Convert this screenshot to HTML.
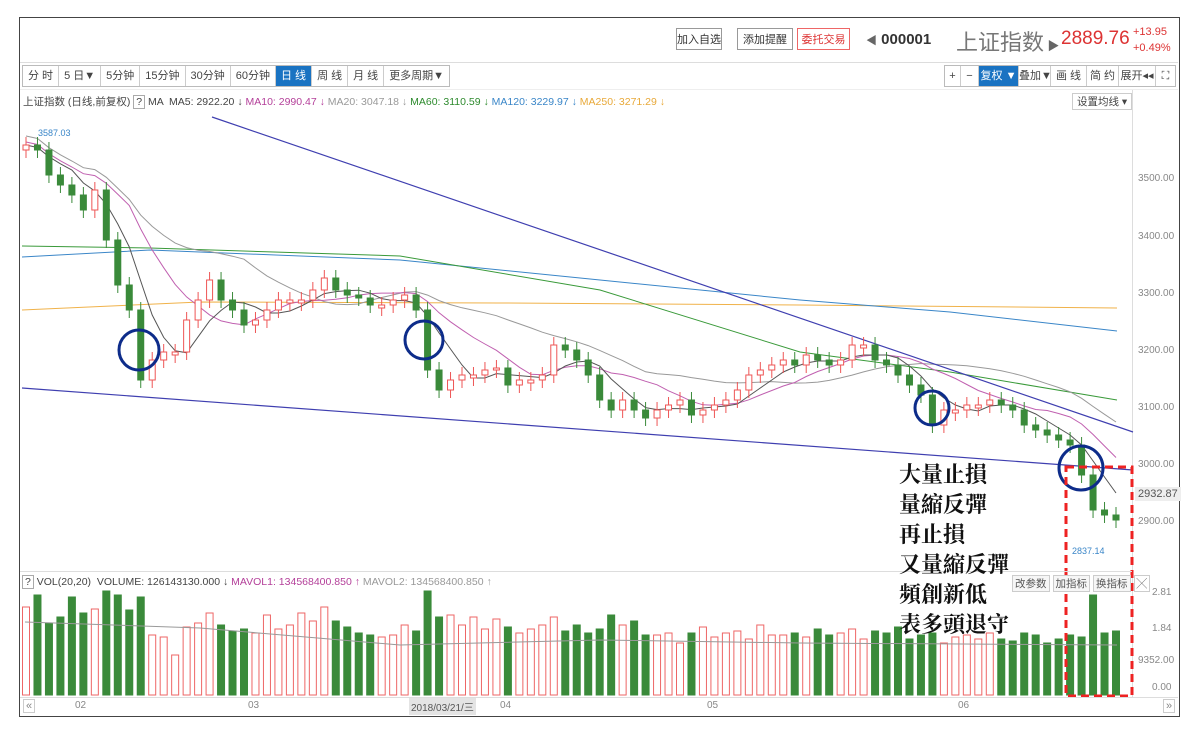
<!DOCTYPE html><html><head><meta charset="utf-8"><style>
body{margin:0;width:1200px;height:734px;background:#fff;font-family:"Liberation Sans","Noto Sans CJK SC",sans-serif;overflow:hidden;position:relative}
.a{position:absolute}
.btn{position:absolute;top:28px;height:22px;border:1px solid #999;font-size:11px;line-height:22px;color:#333;background:#fff;text-align:center;box-sizing:border-box;white-space:nowrap}
.tb{position:absolute;top:65px;height:22px;display:flex;border:1px solid #bbb;box-sizing:border-box}
.tb div{font-size:11px;line-height:20px;padding:0 5px;border-right:1px solid #ccc;color:#444;background:#fff;white-space:nowrap}
.tb2 div{padding:0;text-align:center;box-sizing:border-box}
.tb .on{background:#1a73c2;color:#fff}
.ax{position:absolute;left:1138px;font-size:10px;color:#888}
.big{font-family:"Liberation Serif","Noto Serif CJK SC",serif;font-weight:bold;font-size:22px;color:#111;line-height:30px}
</style></head><body>
<div class="a" style="left:19px;top:17px;width:1159px;height:698px;border:1px solid #444"></div>
<div class="btn" style="left:676px;width:46px">加入自选</div>
<div class="btn" style="left:737px;width:56px">添加提醒</div>
<div class="btn" style="left:797px;width:53px;border-color:#e66;color:#d33">委托交易</div>
<div class="a" style="left:866px;top:31px;font-size:15px;font-weight:bold;color:#333;white-space:nowrap"><span style="font-size:11px;color:#666">◀</span> 000001</div>
<div class="a" style="left:956px;top:25px;font-size:22px;color:#777;white-space:nowrap">上证指数<span style="font-size:12px;color:#666"> ▶</span></div>
<div class="a" style="left:1061px;top:28px;font-size:19px;color:#d33">2889.76</div>
<div class="a" style="left:1133px;top:24px;font-size:11px;color:#d33;line-height:16px">+13.95<br>+0.49%</div>
<div class="a" style="left:20px;top:62px;width:1158px;border-top:1px solid #ddd"></div>
<div class="tb" style="left:22px"><div>分 时</div><div>5 日▼</div><div>5分钟</div><div>15分钟</div><div>30分钟</div><div>60分钟</div><div class="on">日 线</div><div>周 线</div><div>月 线</div><div style="border:0">更多周期▼</div></div>
<div class="tb tb2" style="left:944px;width:232px"><div style="width:16px">+</div><div style="width:18px">−</div><div class="on" style="width:40px">复权 ▼</div><div style="width:32px">叠加▼</div><div style="width:36px">画 线</div><div style="width:32px">简 约</div><div style="width:37px">展开◂◂</div><div style="width:19px;border:0">⛶</div></div>
<div class="a" style="left:20px;top:89px;width:1158px;border-top:1px solid #eee"></div>
<div class="a" style="left:23px;top:94px;font-size:10.5px;color:#444;white-space:nowrap">上证指数 (日线,前复权) <span style="border:1px solid #aaa;padding:0 2px">?</span> MA &nbsp;MA5: 2922.20 <span>↓</span> <span style="color:#b4409a">MA10: 2990.47 ↓</span> <span style="color:#999">MA20: 3047.18 ↓</span> <span style="color:#2e8b2e">MA60: 3110.59 ↓</span> <span style="color:#3a86c8">MA120: 3229.97 ↓</span> <span style="color:#e8a93a">MA250: 3271.29 ↓</span></div>
<div class="a" style="left:1072px;top:93px;font-size:10.5px;color:#444;border:1px solid #ccc;padding:0 4px;white-space:nowrap">设置均线 ▾</div>
<div class="a" style="left:1132px;top:90px;height:607px;border-left:1px solid #ddd"></div>
<div class="ax" style="top:173px">3500.00</div><div class="ax" style="top:231px">3400.00</div><div class="ax" style="top:288px">3300.00</div><div class="ax" style="top:345px">3200.00</div><div class="ax" style="top:402px">3100.00</div><div class="ax" style="top:459px">3000.00</div><div class="ax" style="top:516px">2900.00</div>
<div class="ax" style="top:487px;left:1135px;background:#eee;color:#555;font-size:11px;padding:1px 3px">2932.87</div>
<div class="ax" style="top:587px;left:1152px">2.81</div><div class="ax" style="top:623px;left:1152px">1.84</div><div class="ax" style="top:655px">9352.00</div><div class="ax" style="top:682px;left:1152px">0.00</div>
<svg class="a" style="left:0;top:0" width="1200" height="734" id="s"></svg>
<div class="a" style="left:20px;top:571px;width:1112px;border-top:1px solid #ddd"></div>
<div class="a" style="left:22px;top:576px;font-size:10.5px;color:#444;white-space:nowrap"><span style="border:1px solid #aaa;padding:0 2px">?</span> VOL(20,20) &nbsp;VOLUME: 126143130.000 ↓ <span style="color:#b4409a">MAVOL1: 134568400.850 ↑</span> <span style="color:#999">MAVOL2: 134568400.850 ↑</span></div>
<div class="a" style="left:1012px;top:575px;font-size:10.5px;color:#555;display:flex;gap:3px;white-space:nowrap"><span style="border:1px solid #ccc;padding:0 2px;background:#f6f6f6">改参数</span><span style="border:1px solid #ccc;padding:0 2px;background:#f6f6f6">加指标</span><span style="border:1px solid #ccc;padding:0 2px;background:#f6f6f6">换指标</span><span style="border:1px solid #ccc;padding:0 2px">╳</span></div>
<div class="a" style="left:20px;top:697px;width:1158px;border-top:1px solid #ddd"></div>
<div class="a" style="left:23px;top:699px;font-size:11px;color:#888;border:1px solid #ccc;padding:0 2px">«</div>
<div class="a" style="left:1163px;top:699px;font-size:11px;color:#888;border:1px solid #ccc;padding:0 2px">»</div>
<div class="a" style="left:75px;top:700px;font-size:10px;color:#888">02</div>
<div class="a" style="left:248px;top:700px;font-size:10px;color:#888">03</div>
<div class="a" style="left:409px;top:698px;font-size:10px;color:#555;background:#e4e4e4;padding:1px 2px">2018/03/21/三</div>
<div class="a" style="left:500px;top:700px;font-size:10px;color:#888">04</div>
<div class="a" style="left:707px;top:700px;font-size:10px;color:#888">05</div>
<div class="a" style="left:958px;top:700px;font-size:10px;color:#888">06</div>
<div class="a" style="left:38px;top:128px;font-size:9px;color:#3a86c8">3587.03</div>
<div class="a" style="left:1072px;top:546px;font-size:9px;color:#3a86c8">2837.14</div>
<div class="a big" style="left:899px;top:460px">大量止損<br>量縮反彈<br>再止損<br>又量縮反彈<br>頻創新低<br>表多頭退守</div>
<script>
var ys=[145,150,175,185,195,210,190,240,285,310,380,360,352,352,320,300,280,300,310,325,320,310,300,300,300,290,278,290,295,298,305,305,300,295,310,370,390,380,375,375,370,368,385,380,380,375,345,350,360,375,400,410,400,410,418,410,405,400,415,410,405,400,390,375,370,365,360,365,355,360,365,360,345,345,360,365,375,385,395,425,410,410,405,405,400,405,410,425,430,435,440,445,475,510,515,520];
var N=ys.length,x0=26,dx=(1116-26)/(N-1),h='';
function pl(p,c,w){return '<polyline fill="none" stroke="'+c+'" stroke-width="'+(w||1)+'" points="'+p+'"/>';}
function ma(n){var p='';for(var i=0;i<N;i++){var s=0,k=0;for(var j=Math.max(0,i-n+1);j<=i;j++){s+=ys[j];k++;}p+=(x0+i*dx).toFixed(1)+','+(s/k+(n>5?-(n-5)*0.6:0)).toFixed(1)+' ';}return p;}
h+=pl('22,310 200,302 500,303 800,305 1117,308','#f0b24a');
h+=pl('22,257 150,250 400,260 600,280 800,300 950,312 1117,331','#3a86c8');
h+=pl('22,246 150,248 400,256 600,290 800,352 950,372 1117,400','#3a9a3a');
h+=pl(ma(20),'#999');h+=pl(ma(10),'#c060b0');h+=pl(ma(5),'#555');
h+=pl('212,117 1133,432','#3f3fb0',1.2);h+=pl('22,388 1133,470','#3f3fb0',1.2);
var vh=[88,100,72,78,98,82,86,104,100,85,98,60,58,40,68,72,82,70,64,66,62,80,66,70,82,74,88,74,68,62,60,58,60,70,64,104,78,80,70,78,66,76,68,62,66,70,78,64,70,62,66,80,70,74,60,60,62,52,62,68,58,62,64,56,70,60,60,62,58,66,60,62,66,56,64,62,68,56,60,62,52,58,60,56,62,56,54,62,60,52,56,60,58,100,62,64,56];
for(var i=0;i<N;i++){var x=x0+i*dx,c=ys[i],o=i?ys[i-1]:c+5;if(Math.abs(c-o)<2)o=c+3;var up=c<o,col=up?'#e55':'#3a8a3a';var t=Math.min(c,o),b=Math.max(c,o);
h+='<line x1="'+x+'" x2="'+x+'" y1="'+(t-8)+'" y2="'+(b+8)+'" stroke="'+col+'"/>';
h+='<rect x="'+(x-3)+'" y="'+t+'" width="6" height="'+(b-t)+'" fill="'+(up?'#fff':col)+'" stroke="'+col+'"/>';
var v=vh[i%vh.length];h+='<rect x="'+(x-3.5)+'" y="'+(695-v)+'" width="7" height="'+v+'" fill="'+(up?'#fff':'#3a8a3a')+'" stroke="'+(up?'#e66':'#3a8a3a')+'"/>';}
h+=pl('25,622 200,628 400,645 600,640 800,643 1117,645','#999');
[[139,350,20],[424,340,19],[932,408,17],[1081,468,22]].forEach(function(a){h+='<circle cx="'+a[0]+'" cy="'+a[1]+'" r="'+a[2]+'" fill="none" stroke="#0d2c8a" stroke-width="3"/>';});
h+='<rect x="1066" y="467" width="66" height="229" fill="none" stroke="#e22" stroke-width="3" stroke-dasharray="8,5"/>';
document.getElementById('s').innerHTML=h;
</script>
</body></html>
